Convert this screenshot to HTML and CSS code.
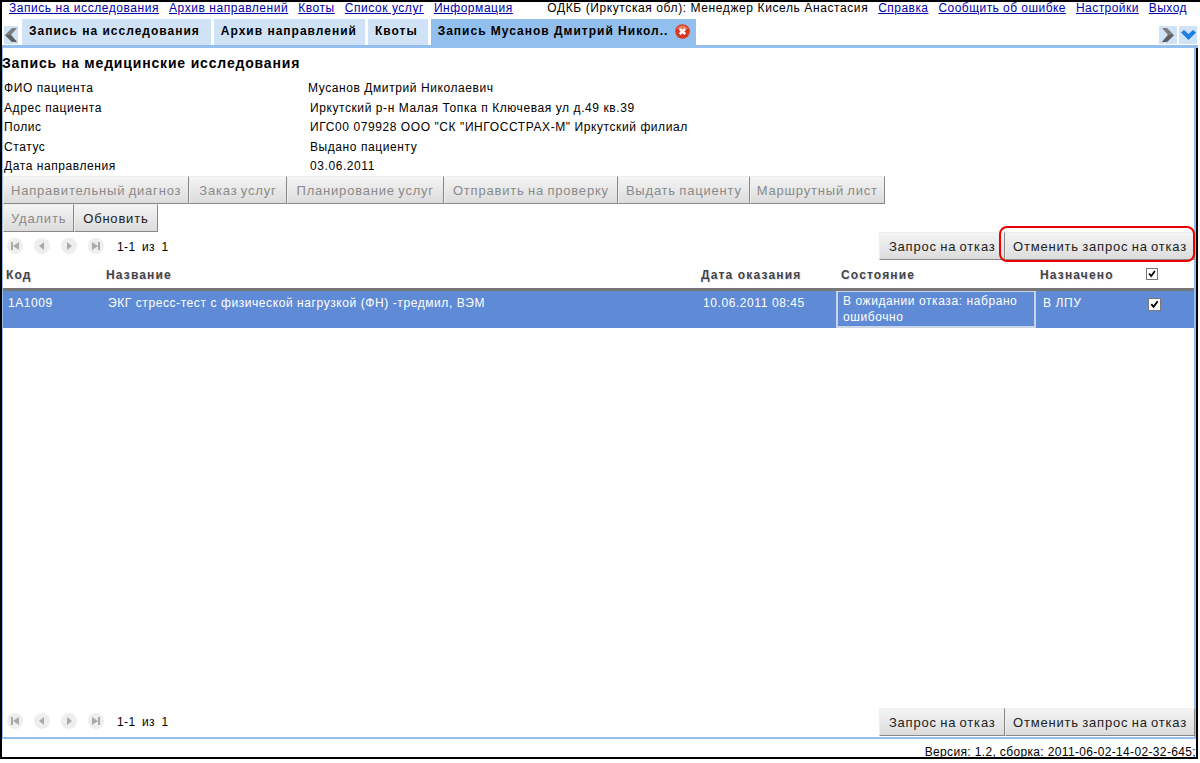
FILE: index.html
```html
<!DOCTYPE html>
<html lang="ru">
<head>
<meta charset="utf-8">
<title>Запись на исследования</title>
<link rel="stylesheet" href="styles.css">
</head>
<body>
<div class="frame">
  <header class="topbar">
    <nav class="links">
      <a href="#">Запись на исследования</a><a href="#">Архив направлений</a><a href="#">Квоты</a><a href="#">Список услуг</a><a href="#">Информация</a>
    </nav>
    <div class="links right">
      <span>ОДКБ (Иркутская обл): Менеджер Кисель Анастасия</span><a href="#">Справка</a><a href="#">Сообщить об ошибке</a><a href="#">Настройки</a><a href="#">Выход</a>
    </div>
  </header>
  <div class="tabbar">
    <span class="scroll narrow"><svg width="12" height="14" viewBox="0 0 12 14"><path d="M7 0 L0 7 L7 14 L12 14 L6 7 L12 0 Z" fill="#7d7d7d"/><path d="M0 7 L7 14 L12 14 L6 7 Z" fill="#5f5f5f"/></svg></span>
    <div class="tabs">
      <div class="tab">Запись на исследования</div>
      <div class="tab">Архив направлений</div>
      <div class="tab">Квоты</div>
      <div class="tab active">Запись Мусанов Дмитрий Никол..
        <svg class="close" width="15" height="15" viewBox="0 0 15 15"><circle cx="7.5" cy="7.5" r="7.3" fill="#d9381e"/><path d="M2 5 A6 6 0 0 1 13 5 Z" fill="#f07a5c"/><path d="M4.8 4.8 L10.2 10.2 M10.2 4.8 L4.8 10.2" stroke="#fff" stroke-width="2.6"/></svg>
      </div>
    </div>
    <span class="scroll"><svg width="12" height="14" viewBox="0 0 12 14"><path d="M5 0 L12 7 L5 14 L0 14 L6 7 L0 0 Z" fill="#7d7d7d"/><path d="M12 7 L5 14 L0 14 L6 7 Z" fill="#5f5f5f"/></svg></span>
    <span class="scroll"><svg width="15" height="10" viewBox="0 0 15 10"><path d="M0 2.5 L3 0 L7.5 4 L12 0 L15 2.5 L7.5 10 Z" fill="#1f7fe0"/></svg></span>
  </div>
  <div class="body">
    <main class="content">
      <h1 class="title">Запись на медицинские исследования</h1>
      <dl class="info">
        <dt>ФИО пациента</dt><dd class="shift">Мусанов Дмитрий Николаевич</dd>
        <dt>Адрес пациента</dt><dd>Иркутский р-н Малая Топка п Ключевая ул д.49 кв.39</dd>
        <dt>Полис</dt><dd>ИГС00 079928 ООО "СК "ИНГОССТРАХ-М" Иркутский филиал</dd>
        <dt>Статус</dt><dd>Выдано пациенту</dd>
        <dt>Дата направления</dt><dd>03.06.2011</dd>
      </dl>
      <div class="btnrow main-actions">
        <button class="btn off">Направительный диагноз</button><button class="btn off">Заказ услуг</button><button class="btn off">Планирование услуг</button><button class="btn off">Отправить на проверку</button><button class="btn off">Выдать пациенту</button><button class="btn off">Маршрутный лист</button>
      </div>
      <div class="btnrow small-actions">
        <button class="btn off">Удалить</button><button class="btn">Обновить</button>
      </div>
      <div class="pager">
        <div class="pagenav">
          <svg class="pg" viewBox="0 0 16 16"><circle cx="8" cy="8" r="8" fill="#eee"/><path d="M4 4h2v8H4zM12 4v8L6 8z" fill="#aaa"/></svg>
          <svg class="pg" viewBox="0 0 16 16"><circle cx="8" cy="8" r="8" fill="#eee"/><path d="M10 4v8L5 8z" fill="#aaa"/></svg>
          <svg class="pg" viewBox="0 0 16 16"><circle cx="8" cy="8" r="8" fill="#eee"/><path d="M6 4v8l5-4z" fill="#aaa"/></svg>
          <svg class="pg" viewBox="0 0 16 16"><circle cx="8" cy="8" r="8" fill="#eee"/><path d="M4 4v8l6-4zM10 4h2v8h-2z" fill="#aaa"/></svg>
          <span class="count">1-1 &nbsp;из&nbsp; 1</span>
        </div>
        <div class="actions">
          <button class="btn wide">Запрос на отказ</button><button class="btn wider">Отменить запрос на отказ</button>
          <span class="mark"></span>
        </div>
      </div>
      <table class="grid">
        <colgroup><col class="c1"><col class="c2"><col class="c3"><col class="c4"><col class="c5"><col></colgroup>
        <thead>
          <tr><th>Код</th><th>Название</th><th>Дата оказания</th><th class="th-state">Состояние</th><th>Назначено</th><th class="th-chk"><span class="cb small"><svg viewBox="0 0 12 12"><path d="M2.5 5.5 L5 8.5 L9.5 2.5" fill="none" stroke="#000" stroke-width="2"/></svg></span></th></tr>
        </thead>
        <tbody>
          <tr><td>1А1009</td><td>ЭКГ стресс-тест с физической нагрузкой (ФН) -тредмил, ВЭМ</td><td>10.06.2011 08:45</td><td class="state"><div>В ожидании отказа: набрано ошибочно</div></td><td class="td-dest">В ЛПУ</td><td class="td-chk"><span class="cb"><svg viewBox="0 0 12 12"><path d="M2.5 5.5 L5 8.5 L9.5 2.5" fill="none" stroke="#000" stroke-width="2"/></svg></span></td></tr>
        </tbody>
      </table>
      <div class="spacer"></div>
      <div class="pager low">
        <div class="pagenav">
          <svg class="pg" viewBox="0 0 16 16"><circle cx="8" cy="8" r="8" fill="#eee"/><path d="M4 4h2v8H4zM12 4v8L6 8z" fill="#aaa"/></svg>
          <svg class="pg" viewBox="0 0 16 16"><circle cx="8" cy="8" r="8" fill="#eee"/><path d="M10 4v8L5 8z" fill="#aaa"/></svg>
          <svg class="pg" viewBox="0 0 16 16"><circle cx="8" cy="8" r="8" fill="#eee"/><path d="M6 4v8l5-4z" fill="#aaa"/></svg>
          <svg class="pg" viewBox="0 0 16 16"><circle cx="8" cy="8" r="8" fill="#eee"/><path d="M4 4v8l6-4zM10 4h2v8h-2z" fill="#aaa"/></svg>
          <span class="count">1-1 &nbsp;из&nbsp; 1</span>
        </div>
        <div class="actions">
          <button class="btn wide">Запрос на отказ</button><button class="btn wider">Отменить запрос на отказ</button>
        </div>
      </div>
    </main>
    <footer class="footer">Версия: 1.2, сборка: 2011-06-02-14-02-32-645;</footer>
  </div>
</div>
</body>
</html>
```
FILE: styles.css
```css
* { box-sizing: border-box; }
html, body { margin: 0; height: 763px; background: #fff; overflow: hidden; }
body { font: 12px "Liberation Sans", Arial, sans-serif; color: #000; letter-spacing: .58px; }
.frame { height: 759px; border-top: 2px solid #000; border-left: 2px solid #000; display: flex; flex-direction: column; }
.topbar { height: 17px; display: flex; justify-content: space-between; padding: 0 13px 0 7px; line-height: 13px; flex: none; }
.links a { color: #00a; margin-right: 10px; letter-spacing: .55px; }
.links.right a { margin: 0 0 0 10px; letter-spacing: .45px; }
.links.right span { letter-spacing: .6px; }
.tabbar { height: 29px; display: flex; align-items: flex-end; border-bottom: 3px solid #93bfee; flex: none; margin-right: 2px; }
.scroll { width: 18px; height: 18px; background: #d0e2f5; display: flex; align-items: center; justify-content: center; margin: 0 1px 1px 1px; }
.scroll.narrow { width: 14px; margin-left: 2px; margin-right: 0; }
.tabs { display: flex; gap: 3px; flex: 1; align-self: stretch; margin-left: 4px; }
.tab { background: #d0e2f5; font-weight: bold; padding: 5px 11px 0 7px; line-height: 14px; white-space: nowrap; letter-spacing: 1px; }
.tab:nth-child(2) { padding-right: 8px; }
.tab:nth-child(3) { padding-right: 10px; }
.tab.active { background: #93bfee; display: flex; gap: 7px; padding-right: 6px; }
.body { flex: 1; min-height: 0; display: flex; flex-direction: column; margin-right: 2px; border-right: 2px solid #000; border-bottom: 2px solid #000; }
.content { flex: 1; display: flex; flex-direction: column; border-left: 1px solid #93bfee; border-right: 2px solid #93bfee; min-height: 0; }
.title { font-size: 14px; font-weight: bold; margin: 7px 0 0 -1px; line-height: 16px; letter-spacing: .83px; height: 23px; }
.info { margin: 0; display: grid; grid-template-columns: 307px 1fr; grid-auto-rows: 19.5px; line-height: 20px; flex: none; }
.info dt { padding-left: 1px; }
.info dd { margin: 0; }
.info dd.shift { margin-left: -2px; }
.btnrow { display: flex; flex: none; }
.btn { font: 13px "Liberation Sans", Arial, sans-serif; letter-spacing: .8px; word-spacing: -1px; height: 28px; padding: 2px 7px 0; background: linear-gradient(#f4f4f4, #dcdcdc); border: 1px solid #eee; border-right-color: #888; border-bottom-color: #888; color: #222; white-space: nowrap; }
.btn.off { color: #8a8a8a; }
.main-actions .btn:nth-child(2), .main-actions .btn:nth-child(3) { padding: 2px 9px 0; }
.main-actions .btn:nth-child(4) { padding: 2px 8px 0; }
.main-actions .btn:nth-child(6) { padding: 2px 6px 0; }
.small-actions .btn { padding: 2px 7px 0; }
.small-actions .btn:nth-child(2) { padding: 2px 8px 0; }
.btn.wide { padding: 1px 8.5px 0; }
.btn.wider { padding: 1px 7px 0; }
.pager { height: 30px; display: flex; justify-content: space-between; align-items: flex-start; flex: none; }
.pagenav { display: flex; align-items: center; gap: 11px; padding: 6px 0 0 4px; }
.pg { width: 16px; height: 16px; }
.count { margin: 2px 0 0 2px; word-spacing: -.5px; letter-spacing: .4px; }
.actions { display: flex; position: relative; margin-right: -1px; }
.pager.low .actions { margin-top: 1px; }
.mark { position: absolute; right: 0; top: -6px; width: 196px; height: 36px; border: 2px solid #e00; border-radius: 8px; pointer-events: none; }
.grid { width: 100%; border-collapse: collapse; table-layout: fixed; flex: none; }
.c1 { width: 100px; } .c2 { width: 595px; } .c3 { width: 135px; } .c4 { width: 204px; } .c5 { width: 96px; }
.grid th { text-align: left; color: #444; font-weight: bold; letter-spacing: 1.15px; height: 28px; padding: 0 3px 0 3px; text-shadow: 1px 1px 1px #dde; border-bottom: 3px solid #777; }
.grid th.th-state { padding-left: 8px; }
.grid th.th-chk { padding-left: 13px; }
.grid td { background: #5f8bd6; color: #fff; height: 38px; padding: 4px 5px; vertical-align: top; line-height: 16px; }
.grid td.td-dest { padding-left: 6px; }
.grid td.td-chk { padding: 7px 0 0 15px; }
.grid td.state { padding: 0 1px 0 3px; }
.state div { border: 2px solid #c9d4e4; padding: 1px 5px; height: 38px; margin: -1px 0 0; line-height: 16px; }
.cb { display: block; width: 13px; height: 13px; background: #fff; border: 1px solid #777; }
.cb.small { width: 12px; height: 12px; margin-top: -1px; }
.cb svg { display: block; width: 100%; height: 100%; }
.spacer { flex: 1; min-height: 0; }
.footer { height: 20px; text-align: right; padding: 6px 0 0; line-height: 14px; flex: none; border-top: 2px solid #93bfee; letter-spacing: .35px; }
```
